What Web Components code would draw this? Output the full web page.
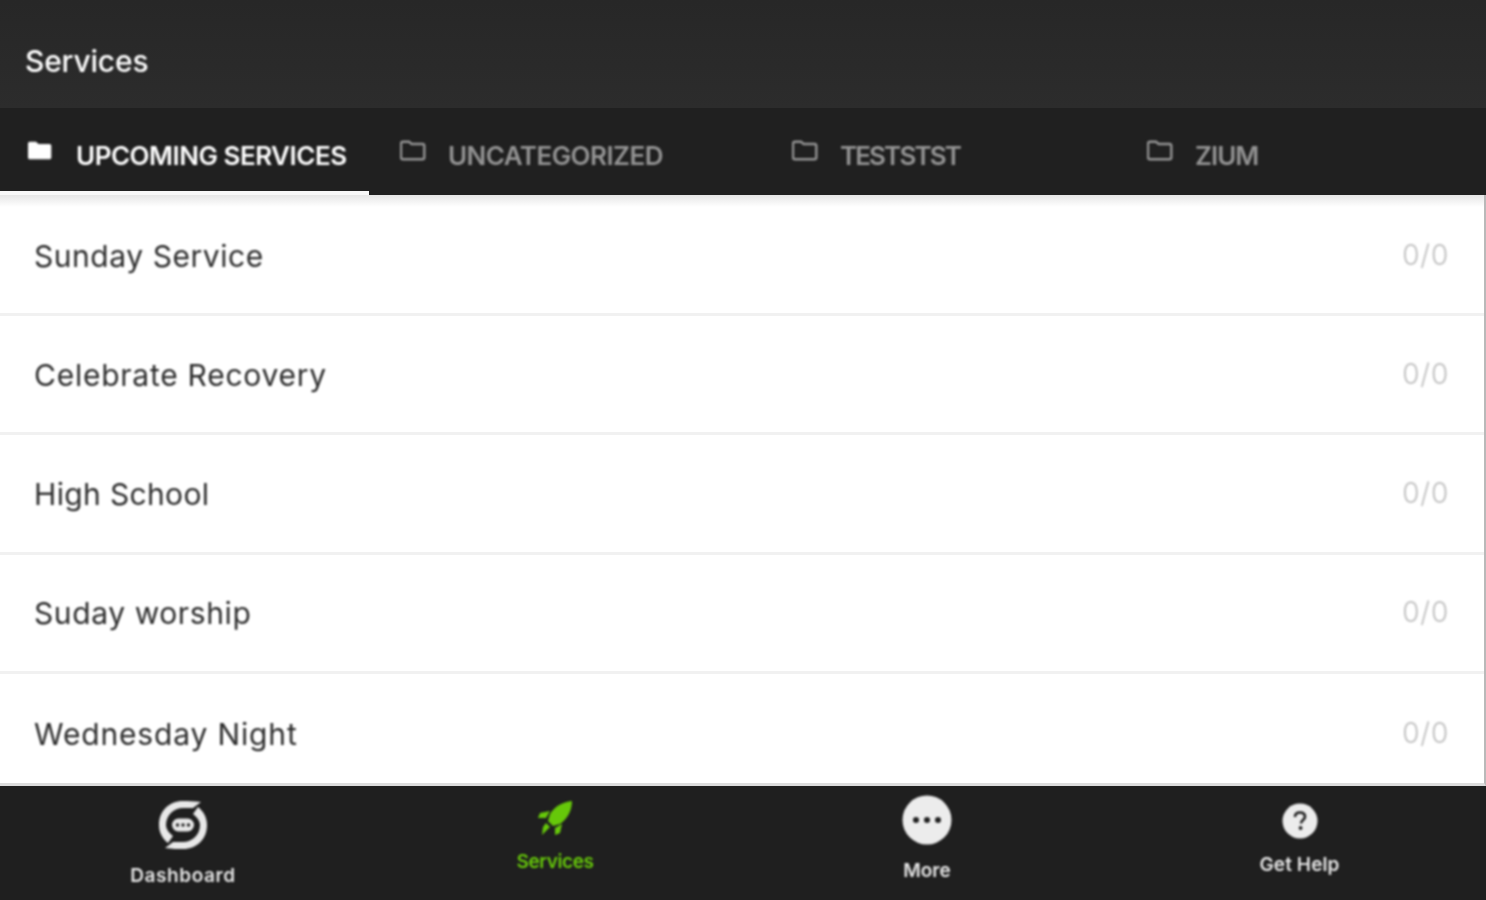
<!doctype html>
<html>
<head>
<meta charset="utf-8">
<title>Services</title>
<style>
  html, body { margin: 0; height: 100%; background: #fff; }
  body { font-family: Inter, "Liberation Sans", sans-serif; overflow: hidden; }
  #app { display: flex; flex-direction: column; width: 1486px; height: 900px; --soft: blur(.8px); }
</style>
</head>
<body>
<div id="app">
  <app-header>Services</app-header>
  <tab-bar>
    <tab-item active width="369" spacing="-.5">UPCOMING SERVICES</tab-item>
    <tab-item width="392" spacing="-.55">UNCATEGORIZED</tab-item>
    <tab-item width="355" spacing="-1.9">TESTSTST</tab-item>
    <tab-item width="370" spacing="-1">ZIUM</tab-item>
  </tab-bar>
  <service-list>
    <service-row count="0/0" spacing=".55">Sunday Service</service-row>
    <service-row count="0/0" spacing=".75">Celebrate Recovery</service-row>
    <service-row count="0/0" spacing=".35">High School</service-row>
    <service-row count="0/0" spacing=".6">Suday worship</service-row>
    <service-row count="0/0" spacing=".85" last>Wednesday Night</service-row>
  </service-list>
  <bottom-nav>
    <nav-item top="14" gap="15" icon="50" spacing=".6" inset="3">
      <svg slot="icon" viewBox="0 0 50 50" width="50" height="50">
        <path d="M43 2 C36 1 30 1 25 1 C11 1 1 11 1 25 C1 33 5 39 10 43 L15 36 C11 33 8 29 8 25 C8 15 16 8 25 8 L35 8 Z" fill="#e8e8e8"/>
        <path d="M7 48 C14 49 20 49 25 49 C39 49 49 39 49 25 C49 17 45 11 40 7 L35 14 C39 17 42 21 42 25 C42 35 34 42 25 42 L15 42 Z" fill="#e8e8e8"/>
        <rect x="14" y="18.5" width="22" height="13" rx="6.5" fill="#e8e8e8"/>
        <circle cx="19.5" cy="25" r="1.7" fill="#1f1f1f"/><circle cx="25" cy="25" r="1.7" fill="#1f1f1f"/><circle cx="30.5" cy="25" r="1.7" fill="#1f1f1f"/>
      </svg>
      Dashboard
    </nav-item>
    <nav-item active top="14" gap="15" icon="36" spacing="-.4">
      <svg slot="icon" viewBox="0 0 36 36" width="36" height="36">
        <path d="M35 1 C25 2 17 7 13 14 L11 21 L16 26 L23 24 C31 18 35 10 35 1 Z" fill="#66c80a"/>
        <path d="M13 11 L3 13 L1 18 L9 18 Z M25 24 L23 33 L18 35 L18 28 Z" fill="#66c80a"/>
        <path d="M9 23 L13 27 L5 35 L6 27 Z" fill="#66c80a"/>
      </svg>
      Services
    </nav-item>
    <nav-item top="9" gap="15" icon="50" spacing="0">
      <svg slot="icon" viewBox="0 0 50 50" width="50" height="50">
        <circle cx="25" cy="25" r="24.5" fill="#ececec"/>
        <circle cx="14" cy="25" r="3" fill="#1f1f1f"/><circle cx="25" cy="25" r="3" fill="#1f1f1f"/><circle cx="36" cy="25" r="3" fill="#1f1f1f"/>
      </svg>
      More
    </nav-item>
    <nav-item top="17" gap="15" icon="36" spacing=".1">
      <svg slot="icon" viewBox="0 0 36 36" width="36" height="36">
        <circle cx="18" cy="18" r="17.5" fill="#ececec"/>
        <path d="M13 14 C13 11 15 9.5 18 9.5 C21 9.5 23 11.2 23 13.7 C23 17 19 17 19 20.5" fill="none" stroke="#1f1f1f" stroke-width="2.6"/>
        <circle cx="18.6" cy="25" r="1.9" fill="#1f1f1f"/>
      </svg>
      Get Help
    </nav-item>
  </bottom-nav>
</div>

<script>
  const def = (name, render) => {
    customElements.define(name, class extends HTMLElement {
      constructor() { super(); this.attachShadow({ mode: "open" }); }
      connectedCallback() { this.shadowRoot.innerHTML = render(this); }
    });
  };

  def("app-header", () => `
    <style>
      :host { display: flex; align-items: center; flex: 0 0 108px; padding: 0 25px 0; box-sizing: border-box;
        background: linear-gradient(#272727, #2c2c2c); color: #fff; font-size: 30px; font-weight: 500; letter-spacing: -.2px; }
      span { position: relative; top: 7px; filter: var(--soft); }
    </style>
    <span><slot></slot></span>`);

  def("tab-bar", () => `
    <style>:host { display: flex; flex: 0 0 87px; background: #202020; position: relative; z-index: 1; }</style>
    <slot></slot>`);

  const folder = `<path d="M1 3.5 C1 2.5 1.8 1.7 2.8 1.7 H9 L11.5 4 H22.5 C23.5 4 24.3 4.8 24.3 5.8 V17.5 C24.3 18.5 23.5 19.3 22.5 19.3 H2.8 C1.8 19.3 1 18.5 1 17.5 Z"`;

  def("tab-item", (el) => {
    const active = el.hasAttribute("active");
    return `
    <style>
      :host { display: flex; box-sizing: border-box; width: ${el.getAttribute("width")}px; height: 87px;
        padding: 28px 0 0 ${active ? 27 : 31}px; gap: ${active ? 23 : 22}px;
        color: ${active ? "#fff" : "#949494"}; font-size: 26px; font-weight: 600; letter-spacing: ${el.getAttribute("spacing")}px;
        ${active ? "border-bottom: 4px solid #f8f8f8;" : ""} }
      svg { flex: none; margin-top: 4px; filter: var(--soft); }
      span { line-height: 38px; white-space: nowrap; margin-top: 1px; filter: var(--soft); }
    </style>
    <svg width="26" height="22" viewBox="0 0 26 22">
      ${active ? folder + ` fill="#fff"/>` : folder + ` fill="none" stroke="#949494" stroke-width="2.4"/>`}
    </svg>
    <span><slot></slot></span>`;
  });

  def("service-list", () => `
    <style>
      :host { display: block; flex: 1; min-height: 0; overflow: hidden; position: relative; background: #fff;
        padding-top: 2px; border-right: 2px solid #b9b9b9; border-bottom: 3px solid #dcdcdc; }
      :host::before { content: ""; position: absolute; left: 0; right: 0; top: 0; height: 12px;
        background: linear-gradient(#e6e6e6, #fff); }
    </style>
    <slot></slot>`);

  def("service-row", (el) => `
    <style>
      :host { display: flex; align-items: center; justify-content: space-between; box-sizing: border-box;
        height: 119.2px; padding: 1px 35px 0 34px; position: relative;
        ${el.hasAttribute("last") ? "" : "border-bottom: 3px solid #f1f1f1;"}
        color: #2c2c2c; font-size: 30px; font-weight: 400; letter-spacing: ${el.getAttribute("spacing")}px; }
      span { filter: var(--soft); }
      .n { color: #bdbdbd; font-weight: 300; font-size: 28px; letter-spacing: .8px; position: relative; top: -1px; }
    </style>
    <span><slot></slot></span><span class="n">${el.getAttribute("count")}</span>`);

  def("bottom-nav", () => `
    <style>
      :host { display: grid; grid-template-columns: 369px repeat(2, 372px) 373px; flex: 0 0 114px; background: #1f1f1f; }
    </style>
    <slot></slot>`);

  def("nav-item", (el) => `
    <style>
      :host { display: flex; flex-direction: column; align-items: center; box-sizing: border-box;
        padding-top: ${el.getAttribute("top")}px; padding-right: ${el.getAttribute("inset") || 0}px; gap: ${el.getAttribute("gap")}px;
        color: ${el.hasAttribute("active") ? "#66c80a" : "#e6e6e6"}; font-size: 19px; font-weight: 600; letter-spacing: ${el.getAttribute("spacing")}px; }
      .i { height: ${el.getAttribute("icon")}px; filter: var(--soft); }
      .t { line-height: 22px; filter: var(--soft); }
    </style>
    <div class="i"><slot name="icon"></slot></div>
    <div class="t"><slot></slot></div>`);
</script>
</body>
</html>
